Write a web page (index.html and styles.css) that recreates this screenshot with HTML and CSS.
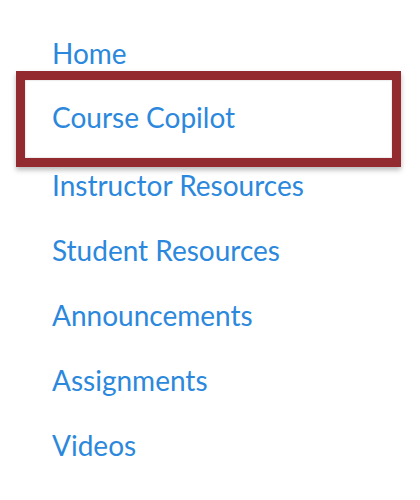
FILE: index.html
```html
<!DOCTYPE html>
<html lang="en">
<head>
<meta charset="utf-8">
<title>Course navigation</title>
<link rel="stylesheet" href="styles.css">
</head>
<body>
<nav class="course-nav">
  <ul class="nav-list">
    <li class="nav-item"><a class="nav-link" href="#">Home</a></li>
    <li class="nav-item nav-item--highlight"><a class="nav-link" href="#">Course Copilot</a></li>
    <li class="nav-item"><a class="nav-link" href="#">Instructor Resources</a></li>
    <li class="nav-item"><a class="nav-link" href="#">Student Resources</a></li>
    <li class="nav-item"><a class="nav-link" href="#">Announcements</a></li>
    <li class="nav-item"><a class="nav-link" href="#">Assignments</a></li>
    <li class="nav-item"><a class="nav-link" href="#">Videos</a></li>
  </ul>
</nav>
</body>
</html>
```

FILE: styles.css
```css
html, body {
  margin: 0;
  padding: 0;
  background: #ffffff;
}

body {
  font-family: Lato, "Open Sans", "Liberation Sans", sans-serif;
  width: 420px;
  height: 500px;
  overflow: hidden;
}

.course-nav {
  padding: 20.7px 19px 0 16px;
}

.nav-list {
  list-style: none;
  margin: 0;
  padding: 0;
}

.nav-item {
  height: 65px;
  line-height: 65px;
  padding-left: 36px;
  font-size: 28px;
  white-space: nowrap;
}

.nav-item--highlight {
  height: 74.3px;
  line-height: 74.3px;
  padding-left: 27px;
  padding-bottom: 3.7px;
  border: 9px solid #922a30;
  margin: -14.7px 0 -14.3px;
  box-shadow: 0 3px 5px rgba(0, 0, 0, 0.28), inset 0 0 2px rgba(0, 0, 0, 0.25);
}

.nav-link {
  color: #2b88dc;
  text-decoration: none;
}
```
